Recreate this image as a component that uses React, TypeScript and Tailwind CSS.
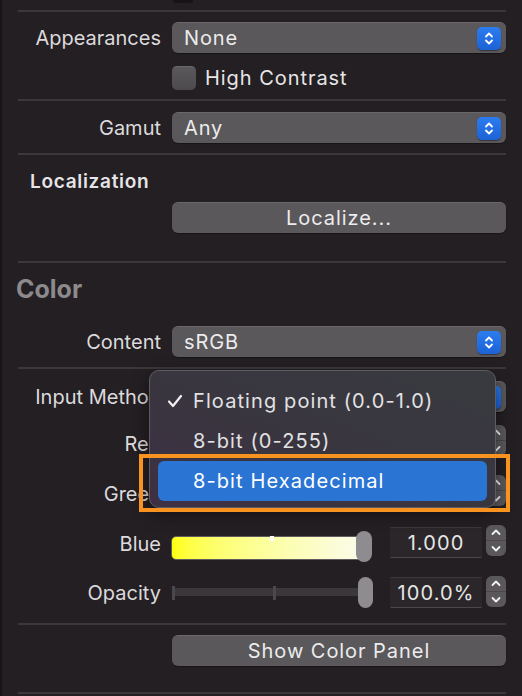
import type { ReactNode } from 'react'

const FONT = "font-['Inter','Liberation_Sans',sans-serif]"

function Separator({ className = '' }: { className?: string }) {
  return <div className={`h-[2px] bg-[#3b383b] ${className}`} />
}

/** Blå op/ned-knap inde i popup-menuen */
function PopupArrows() {
  return (
    <div className="flex h-[23px] w-[24px] items-center justify-center rounded-[5px] bg-gradient-to-b from-[#2b7cf0] to-[#1c62d6] shadow-[0_1px_1px_rgba(0,0,0,0.4)]">
      <svg width="10" height="15" viewBox="0 0 10 15" fill="none" stroke="white" strokeWidth="1.8" strokeLinecap="round" strokeLinejoin="round">
        <path d="M2 5.5 L5 2.5 L8 5.5" />
        <path d="M2 9.5 L5 12.5 L8 9.5" />
      </svg>
    </div>
  )
}

function Popup({ value }: { value: string }) {
  return (
    <div className="flex h-[31px] flex-1 items-center justify-between rounded-[6px] border-t border-[#6a686b] bg-[#5a585b] pl-[12px] pr-[5px] shadow-[0_1px_1px_rgba(0,0,0,0.35)]">
      <span className="whitespace-nowrap text-[20px] leading-none tracking-[0.9px] text-[#ececec]">{value}</span>
      <PopupArrows />
    </div>
  )
}

function Button({ label }: { label: string }) {
  return (
    <div className="flex h-[31px] flex-1 items-center justify-center rounded-[6px] border-t border-[#6a686b] bg-[#5a585b] shadow-[0_1px_1px_rgba(0,0,0,0.35)]">
      <span className="text-[20px] leading-none tracking-[0.95px] text-[#ececec]">{label}</span>
    </div>
  )
}

function Row({ label, children, className = '' }: { label: string; children: ReactNode; className?: string }) {
  return (
    <div className={`flex items-center gap-[11px] ${className}`}>
      <div className="w-[143px] shrink-0 whitespace-nowrap text-right text-[20px] leading-none text-[#dcdadc]">{label}</div>
      {children}
    </div>
  )
}

function Stepper({ className = '' }: { className?: string }) {
  return (
    <div className={`flex h-[31px] w-[20px] flex-col rounded-[6px] bg-[#5a585b] ${className}`}>
      <div className="flex flex-1 items-center justify-center border-b border-[#4a484b]">
        <svg width="10" height="7" viewBox="0 0 10 7" fill="none" stroke="#f2f2f2" strokeWidth="1.8" strokeLinecap="round" strokeLinejoin="round">
          <path d="M1.5 5 L5 1.5 L8.5 5" />
        </svg>
      </div>
      <div className="flex flex-1 items-center justify-center">
        <svg width="10" height="7" viewBox="0 0 10 7" fill="none" stroke="#f2f2f2" strokeWidth="1.8" strokeLinecap="round" strokeLinejoin="round">
          <path d="M1.5 2 L5 5.5 L8.5 2" />
        </svg>
      </div>
    </div>
  )
}

function ValueField({ value, className = '' }: { value: string; className?: string }) {
  return (
    <div className={`flex h-[31px] w-[92px] items-center justify-center border border-[#45424600] border-t-[#3a373a] border-b-[#4c494c] bg-[#2a2629] ${className}`}>
      <span className="text-[20px] leading-none tracking-[1.1px] text-[#e6e6e6]">{value}</span>
    </div>
  )
}

/** Farveslider (Red/Green/Blue) — kun Blue er synlig, de andre ligger bag menuen */
function ColorSliderRow({ label, value, track, className = '' }: { label: string; value: string; track: string; className?: string }) {
  return (
    <div className={`flex h-[37px] items-start ${className}`}>
      <div className="mt-[7px] w-[143px] shrink-0 whitespace-nowrap text-right text-[20px] leading-[24px] text-[#dcdadc]">{label}</div>
      <div className="relative ml-[10px] mt-[6px] h-[31px] w-[201px]">
        <div className={`mt-[5px] h-[24px] w-[192px] rounded-[5px] border border-[#5e5c5f] ${track}`} />
        <div className="absolute left-[99px] top-[5px] h-[5px] w-[4px] bg-white" />
        <div className="absolute right-0 top-0 h-[31px] w-[16px] rounded-full bg-[#8e8c8f]" />
      </div>
      <ValueField value={value} className="ml-[18px] mt-[2px]" />
      <Stepper className="ml-[4px]" />
    </div>
  )
}

function OpacityRow() {
  return (
    <div className="flex h-[34px] items-start">
      <div className="mt-[6px] w-[143px] shrink-0 text-right text-[20px] leading-[24px] text-[#dcdadc]">Opacity</div>
      <div className="relative ml-[11px] mt-[2px] h-[31px] w-[201px]">
        <div className="absolute left-0 top-[11px] h-[8px] w-[188px] bg-[#3a383b]" />
        <div className="absolute left-0 top-[9px] h-[14px] w-[3px] bg-[#4a484b]" />
        <div className="absolute left-[101px] top-[9px] h-[14px] w-[3px] bg-[#4a484b]" />
        <div className="absolute left-[186px] top-0 h-[31px] w-[15px] rounded-full bg-[#8e8c8f]" />
      </div>
      <ValueField value="100.0%" className="ml-[17px] mt-[2px]" />
      <Stepper className="ml-[4px] mt-[1px] h-[30px]" />
    </div>
  )
}

function InputMethodMenu() {
  const items = ['Floating point (0.0-1.0)', '8-bit (0-255)', '8-bit Hexadecimal']
  return (
    <div className="absolute left-[147px] top-[370px] h-[138px] w-[347px] rounded-[10px] border border-[#5d5c62] bg-gradient-to-tr from-[#3d3043] via-[#39363f] to-[#393a40] px-[8px] pt-[10px] shadow-[0_6px_16px_rgba(0,0,0,0.5)]">
      {items.map((item, i) => (
        <div
          key={item}
          className={`flex h-[40px] items-center rounded-[6px] ${i === 2 ? 'bg-[#2a74d3] text-white' : 'text-[#e2e2e4]'}`}
        >
          <div className="flex w-[35px] justify-start pl-[9px]">
            {i === 0 && (
              <svg width="16" height="14" viewBox="0 0 16 14" fill="none" stroke="#f0f0f0" strokeWidth="2.2" strokeLinecap="round" strokeLinejoin="round">
                <path d="M2 7.5 L6 12 L14 2" />
              </svg>
            )}
          </div>
          <span className="whitespace-nowrap text-[20px] leading-none tracking-[1.1px]">{item}</span>
        </div>
      ))}
    </div>
  )
}

export default function App() {
  return (
    <div className={`relative h-[696px] w-[522px] overflow-hidden border-l-2 border-[#171517] bg-[#241f23] pl-[16px] pr-[16px] ${FONT}`}>
      {/* rest af kontrol fra sektionen ovenover */}
      <div className="h-[10px]">
        <div className="ml-[155px] h-[3px] w-[20px] rounded-b-[4px] bg-[#161416]" />
      </div>
      <Separator />

      <Row label="Appearances" className="mt-[10px]">
        <Popup value="None" />
      </Row>
      <div className="ml-[154px] mt-[13px] flex h-[24px] items-center gap-[9px]">
        <div className="h-[24px] w-[24px] rounded-[5px] border-t border-[#6a686b] bg-gradient-to-b from-[#5a585b] to-[#4c4a4d]" />
        <span className="text-[20px] leading-none tracking-[0.95px] text-[#e6e6e6]">High Contrast</span>
      </div>
      <Separator className="mt-[9px]" />

      <Row label="Gamut" className="mt-[11px]">
        <Popup value="Any" />
      </Row>
      <Separator className="mt-[10px]" />

      <div className="ml-[12px] mt-[17px] h-[20px] text-[19px] font-semibold leading-[20px] tracking-[0.7px] text-[#e6e4e6]">Localization</div>
      <div className="ml-[154px] mt-[10px] flex">
        <Button label="Localize..." />
      </div>
      <Separator className="mt-[28px]" />

      <div className="ml-[-2px] mt-[11px] h-[30px] text-[25px] font-bold leading-[30px] text-[#8c8a8d]">Color</div>

      <Row label="Content" className="mt-[22px]">
        <Popup value="sRGB" />
      </Row>
      <Separator className="mt-[10px]" />

      {/* popup'en ligger bag den åbne menu — værdien er skjult */}
      <Row label="Input Method" className="mt-[12px]">
        <Popup value="" />
      </Row>

      <ColorSliderRow label="Red" value="1.000" track="bg-gradient-to-r from-[#00ff00] to-[#ffff00]" className="mt-[13px]" />
      <ColorSliderRow label="Green" value="1.000" track="bg-gradient-to-r from-[#ff0000] to-[#ffff00]" className="mt-[13px]" />
      <ColorSliderRow label="Blue" value="1.000" track="bg-gradient-to-r from-[#ffff00] to-[#fbfbea]" className="mt-[13px]" />
      <div className="mt-[13px]">
        <OpacityRow />
      </div>

      <Separator className="mt-[14px]" />
      <div className="ml-[154px] mt-[10px] flex">
        <Button label="Show Color Panel" />
      </div>
      <Separator className="mt-[26px]" />

      <InputMethodMenu />
      <div className="absolute left-[137px] top-[454px] h-[58px] w-[371px] border-[4px] border-[#f7931e]" />
    </div>
  )
}
